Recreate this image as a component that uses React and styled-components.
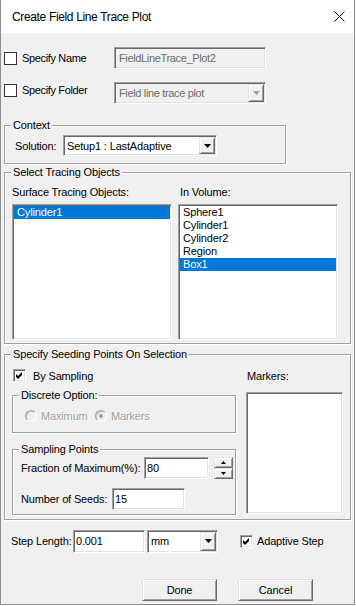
import React from 'react'
import styled, { createGlobalStyle } from 'styled-components'

const GlobalStyle = createGlobalStyle`
  html, body { margin: 0; padding: 0; background: #ffffff; }
  body {
    font-family: "Liberation Sans", Arial, sans-serif;
    font-size: 11px;
    letter-spacing: -0.15px;
    color: #000;
  }
`

// classic 3D edges
const sunken = `
  border: 1px solid;
  border-color: #a0a0a0 #ffffff #ffffff #a0a0a0;
  box-shadow: inset 1px 1px #696969, inset -1px -1px #e3e3e3;
`
const raised = `
  border: 1px solid;
  border-color: #e3e3e3 #696969 #696969 #e3e3e3;
  box-shadow: inset 1px 1px #ffffff, inset -1px -1px #a0a0a0;
`

const Window = styled.div`
  box-sizing: border-box;
  width: 355px;
  height: 605px;
  border: 1px solid #8e8e8e;
  border-top: none;
  display: flex;
  flex-direction: column;
  background: #f0f0f0;
`

const TitleBar = styled.div`
  height: 33px;
  flex: none;
  background: #fff;
  display: flex;
  align-items: center;
  justify-content: space-between;
  padding: 0 9px 0 11px;
  font-size: 12px;
  letter-spacing: -0.35px;
`

const Body = styled.div`
  flex: 1;
  display: flex;
  flex-direction: column;
  align-items: flex-start;
  padding: 14px 0 0 3px;
`

const TopRow = styled.div`
  display: grid;
  grid-template-columns: 13px 87px 152px;
  column-gap: 5px;
  align-items: center;
  height: 22px;
  margin-top: ${p => p.$mt || 0}px;
  letter-spacing: -0.35px;
`

const FlatCheck = styled.div`
  box-sizing: border-box;
  width: 13px;
  height: 13px;
  border: 1px solid #333;
  background: #fff;
`

const TopLabel = styled.div`
  white-space: nowrap;
`

const Edit = styled.div`
  box-sizing: border-box;
  width: ${p => p.$w}px;
  height: ${p => p.$h || 22}px;
  ${sunken}
  background: ${p => (p.$disabled ? '#f0f0f0' : '#fff')};
  color: ${p => (p.$disabled ? '#6d6d6d' : '#000')};
  padding-left: ${p => p.$pad || 2}px;
  display: flex;
  align-items: center;
  white-space: nowrap;
  overflow: hidden;
`

const Combo = styled.div`
  box-sizing: border-box;
  width: ${p => p.$w}px;
  height: ${p => p.$h || 22}px;
  ${sunken}
  background: ${p => (p.$disabled ? '#f0f0f0' : '#fff')};
  color: ${p => (p.$disabled ? '#6d6d6d' : '#000')};
  padding: 1px;
  display: flex;
  align-items: stretch;
  margin-top: ${p => p.$drop || 0}px;
  margin-bottom: ${p => -(p.$drop || 0)}px;
  margin-left: ${p => p.$ml || 0}px;
`

const ComboText = styled.div`
  flex: 1;
  display: flex;
  align-items: center;
  padding-left: ${p => p.$pad || 2}px;
  white-space: nowrap;
  overflow: hidden;
`

const ArrowBtn = styled.div`
  box-sizing: border-box;
  width: ${p => p.$w || 16}px;
  flex: ${p => (p.$stack ? 1 : 'none')};
  ${raised}
  background: #f0f0f0;
  display: flex;
  align-items: center;
  justify-content: center;
`

const Group = styled.div`
  box-sizing: border-box;
  width: ${p => p.$w}px;
  margin-top: ${p => p.$mt || 0}px;
  border: 1px solid #a0a0a0;
  box-shadow: inset 1px 1px #fff, 1px 1px #fff;
  padding-bottom: ${p => p.$pb || 0}px;
`

const Legend = styled.div`
  width: fit-content;
  height: 13px;
  line-height: 13px;
  margin: -7px 0 0 6px;
  padding: 0 2px;
  background: #f0f0f0;
  white-space: nowrap;
`

const SolutionRow = styled.div`
  display: grid;
  grid-template-columns: 48px auto;
  align-items: center;
  margin-top: 3px;
  padding-left: 10px;
`

const ListsGrid = styled.div`
  display: grid;
  grid-template-columns: 160px 160px;
  column-gap: 6px;
  row-gap: 5px;
  margin-top: 7px;
  padding-left: 7px;
`

const Caption = styled.div`
  line-height: 13px;
  height: 13px;
  padding-left: ${p => p.$pl || 0}px;
  margin-top: ${p => p.$mt || 0}px;
  white-space: nowrap;
`

const ListBox = styled.div`
  box-sizing: border-box;
  height: ${p => p.$h}px;
  width: ${p => (p.$w ? `${p.$w}px` : 'auto')};
  ${sunken}
  background: #fff;
  padding: 1px 1px;
  margin-top: ${p => p.$mt || 0}px;
`

const Item = styled.div`
  height: 13px;
  line-height: 13px;
  padding-left: 3px;
  background: ${p => (p.$sel ? '#0078d7' : 'transparent')};
  color: ${p => (p.$sel ? '#fff' : '#000')};
  white-space: nowrap;
`

const SeedGrid = styled.div`
  display: grid;
  grid-template-columns: 224px 97px;
  column-gap: 10px;
  padding-left: 7px;
`

const Column = styled.div`
  display: flex;
  flex-direction: column;
`

const CheckRow = styled.div`
  display: flex;
  align-items: center;
  gap: ${p => p.$gap || 7}px;
  margin-top: ${p => p.$mt || 0}px;
  margin-left: ${p => p.$ml || 0}px;
  height: 13px;
  white-space: nowrap;
`

const ClassicCheck = styled.div`
  box-sizing: border-box;
  width: 13px;
  height: 13px;
  ${sunken}
  background: #fff;
  display: flex;
  align-items: center;
  justify-content: center;
`

const RadioRow = styled.div`
  display: flex;
  align-items: center;
  margin: 8px 0 0 12px;
  height: 12px;
`

const RadioItem = styled.div`
  display: flex;
  align-items: center;
  gap: 4px;
  width: ${p => (p.$w ? `${p.$w}px` : 'auto')};
  color: #a0a0a0;
  text-shadow: 1px 1px #fff;
  white-space: nowrap;
`

const Radio = styled.div`
  box-sizing: border-box;
  width: 12px;
  height: 12px;
  border-radius: 50%;
  border: 1px solid;
  border-color: #a0a0a0 #fff #fff #a0a0a0;
  box-shadow: inset 1px 1px #c8c8c8;
  background: #f0f0f0;
  display: flex;
  align-items: center;
  justify-content: center;

  &::after {
    content: '';
    display: ${p => (p.$on ? 'block' : 'none')};
    width: 4px;
    height: 4px;
    border-radius: 50%;
    background: #a0a0a0;
  }
`

const FieldRow = styled.div`
  display: grid;
  grid-template-columns: ${p => p.$label}px auto auto;
  column-gap: 2px;
  align-items: center;
  margin-top: ${p => p.$mt || 0}px;
  padding-left: 8px;
  white-space: nowrap;
`

const Spin = styled.div`
  display: flex;
  flex-direction: column;
  width: 19px;
  height: 22px;
`

const StepRow = styled.div`
  display: flex;
  align-items: center;
  height: 22px;
  margin-top: 10px;
  padding-left: 7px;
  white-space: nowrap;
`

const StepLabel = styled.div`
  width: 62px;
`

const ButtonRow = styled.div`
  display: flex;
  gap: 21px;
  margin-top: 27px;
  padding-left: 138px;
`

const PushButton = styled.div`
  box-sizing: border-box;
  width: 75px;
  height: 22px;
  ${raised}
  background: #f0f0f0;
  display: flex;
  align-items: center;
  justify-content: center;
`

const Down = ({ color = '#000' }) => (
  <svg width="7" height="4" viewBox="0 0 7 4">
    <polygon points="0,0 7,0 3.5,4" fill={color} />
  </svg>
)

const Tiny = ({ up }) => (
  <svg width="5" height="3" viewBox="0 0 5 3">
    <polygon points={up ? '2.5,0 5,3 0,3' : '0,0 5,0 2.5,3'} fill="#000" />
  </svg>
)

const Tick = () => (
  <svg width="7" height="7" viewBox="0 0 7 7">
    <polygon points="0,2 2,4 6,0 6,3 2,7 0,5" fill="#000" />
  </svg>
)

const CloseIcon = () => (
  <svg width="11" height="11" viewBox="0 0 11 11">
    <path d="M0.5 0.5 L10.5 10.5 M10.5 0.5 L0.5 10.5" stroke="#000" strokeWidth="1" fill="none" />
  </svg>
)

const volumeItems = ['Sphere1', 'Cylinder1', 'Cylinder2', 'Region', 'Box1']

export default function App() {
  return (
    <>
      <GlobalStyle />
      <Window>
        <TitleBar>
          <span>Create Field Line Trace Plot</span>
          <CloseIcon />
        </TitleBar>
        <Body>
          <TopRow>
            <FlatCheck />
            <TopLabel>Specify Name</TopLabel>
            <Edit $w={152} $disabled $pad={4}>FieldLineTrace_Plot2</Edit>
          </TopRow>
          <TopRow $mt={10}>
            <FlatCheck />
            <TopLabel>Specify Folder</TopLabel>
            <Combo $w={152} $disabled $drop={3}>
              <ComboText $pad={3}>Field line trace plot</ComboText>
              <ArrowBtn><Down color="#a0a0a0" /></ArrowBtn>
            </Combo>
          </TopRow>

          <Group $w={282} $mt={24} $pb={7}>
            <Legend>Context</Legend>
            <SolutionRow>
              <span>Solution:</span>
              <Combo $w={154} $h={21}>
                <ComboText>Setup1 : LastAdaptive</ComboText>
                <ArrowBtn><Down /></ArrowBtn>
              </Combo>
            </SolutionRow>
          </Group>

          <Group $w={347} $mt={8} $pb={3}>
            <Legend>Select Tracing Objects</Legend>
            <ListsGrid>
              <Caption>Surface Tracing Objects:</Caption>
              <Caption $pl={2}>In Volume:</Caption>
              <ListBox $h={136}>
                <Item $sel>Cylinder1</Item>
              </ListBox>
              <ListBox $h={136}>
                {volumeItems.map(name => (
                  <Item key={name} $sel={name === 'Box1'}>{name}</Item>
                ))}
              </ListBox>
            </ListsGrid>
          </Group>

          <Group $w={347} $mt={10} $pb={4}>
            <Legend>Specify Seeding Points On Selection</Legend>
            <SeedGrid>
              <Column>
                <CheckRow $mt={8} $ml={1}>
                  <ClassicCheck><Tick /></ClassicCheck>
                  <span>By Sampling</span>
                </CheckRow>
                <Group $w={224} $mt={13} $pb={10}>
                  <Legend>Discrete Option:</Legend>
                  <RadioRow>
                    <RadioItem $w={70}><Radio /><span>Maximum</span></RadioItem>
                    <RadioItem><Radio $on /><span>Markers</span></RadioItem>
                  </RadioRow>
                </Group>
                <Group $w={224} $mt={16} $pb={4}>
                  <Legend>Sampling Points</Legend>
                  <FieldRow $label={121} $mt={1}>
                    <span>Fraction of Maximum(%):</span>
                    <Edit $w={65}>80</Edit>
                    <Spin>
                      <ArrowBtn $w={19} $stack><Tiny up /></ArrowBtn>
                      <ArrowBtn $w={19} $stack><Tiny /></ArrowBtn>
                    </Spin>
                  </FieldRow>
                  <FieldRow $label={89} $mt={9}>
                    <span>Number of Seeds:</span>
                    <Edit $w={73}>15</Edit>
                  </FieldRow>
                </Group>
              </Column>
              <Column>
                <Caption $mt={9} $pl={1}>Markers:</Caption>
                <ListBox $h={122} $w={97} $mt={9} />
              </Column>
            </SeedGrid>
          </Group>

          <StepRow>
            <StepLabel>Step Length:</StepLabel>
            <Edit $w={72} $h={23}>0.001</Edit>
            <Combo $w={71} $h={23} $ml={2}>
              <ComboText>mm</ComboText>
              <ArrowBtn><Down /></ArrowBtn>
            </Combo>
            <CheckRow $ml={22} $gap={4}>
              <ClassicCheck><Tick /></ClassicCheck>
              <span>Adaptive Step</span>
            </CheckRow>
          </StepRow>

          <ButtonRow>
            <PushButton>Done</PushButton>
            <PushButton>Cancel</PushButton>
          </ButtonRow>
        </Body>
      </Window>
    </>
  )
}
